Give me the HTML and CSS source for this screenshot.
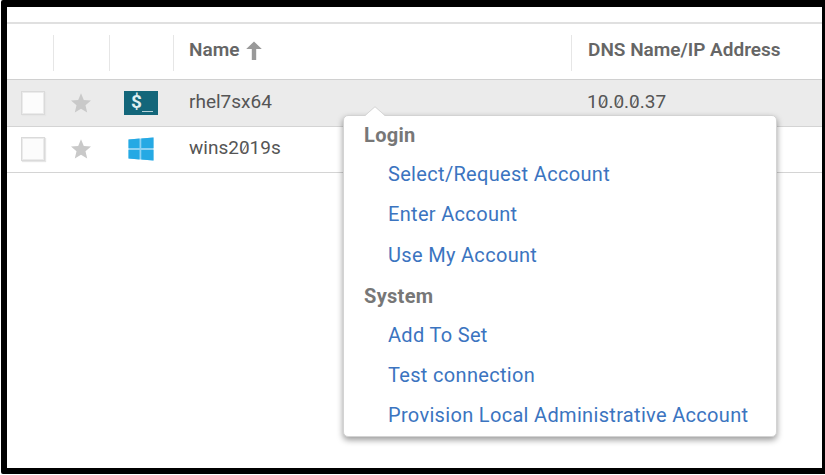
FILE: index.html
```html
<!DOCTYPE html>
<html lang="en">
<head>
<meta charset="utf-8">
<title>Systems</title>
<link rel="stylesheet" href="styles.css">
</head>
<body>
<main class="frame">
  <div class="grid">
    <div class="row head">
      <div class="cell"></div>
      <div class="cell"></div>
      <div class="cell"></div>
      <div class="cell name"><span>Name</span>
        <svg class="arrow" width="16" height="20" viewBox="0 0 16 20"><path d="M8 .5 15.8 8H10.2V19H5.8V8H.2Z" fill="#999"/></svg>
      </div>
      <div class="cell dns"><span>DNS Name/IP Address</span></div>
    </div>
    <div class="row selected">
      <div class="cell check"><span class="box"></span></div>
      <div class="cell star"><svg width="20" height="20" viewBox="0 0 20 20"><path d="M10 .2 12.8 7 20 7.6 14.5 12.3 16.2 19.5 10 15.7 3.8 19.5 5.5 12.3 0 7.6 7.2 7Z" fill="#c9c9c9"/></svg></div>
      <div class="cell os"><span class="terminal">$<i></i></span></div>
      <div class="cell name"><span>rhel7sx64</span></div>
      <div class="cell dns"><span>1<span class="zero">0</span>.<span class="zero">0</span>.<span class="zero">0</span>.37</span></div>
    </div>
    <div class="row plain">
      <div class="cell check"><span class="box"></span></div>
      <div class="cell star"><svg width="20" height="20" viewBox="0 0 20 20"><path d="M10 .2 12.8 7 20 7.6 14.5 12.3 16.2 19.5 10 15.7 3.8 19.5 5.5 12.3 0 7.6 7.2 7Z" fill="#c9c9c9"/></svg></div>
      <div class="cell os"><svg width="26" height="24" viewBox="0 0 26 24"><path d="M.5 2.5 25.5.5V23.5L.5 21.5Z" fill="#8dd1f2"/><path d="M.5 2.5 11.5 1.6V11H.5ZM13.3 1.5 25.5.5V11H13.3ZM.5 13H11.5V22.4L.5 21.5ZM13.3 13H25.5V23.5L13.3 22.5Z" fill="#25a9e4"/></svg></div>
      <div class="cell name"><span>wins2<span class="zero">0</span>19s</span></div>
      <div class="cell dns"></div>
    </div>
  </div>
  <nav class="menu">
    <svg class="notch" width="22" height="11" viewBox="0 0 22 11"><path d="M1 10 11 1 21 10V11H1Z" fill="#fff"/><path d="M1 9.5 11 .7 21 9.5" fill="none" stroke="#d6d6d6"/></svg>
    <h2>Login</h2>
    <a>Select/Request Account</a>
    <a>Enter Account</a>
    <a class="tall">Use My Account</a>
    <h2 class="second">System</h2>
    <a>Add To Set</a>
    <a>Test connection</a>
    <a>Provision Local Administrative Account</a>
  </nav>
</main>
</body>
</html>
```
FILE: styles.css
```css
* { box-sizing: border-box; }
html, body { margin: 0; background: #fff; }
body {
  width: 825px;
  height: 475px;
  overflow: hidden;
  padding: 0 0 1px 1px;
  font: 19px/24px Roboto, "Liberation Sans", sans-serif;
  color: #555;
}
.frame {
  position: relative;
  height: 474px;
  border: solid #000;
  border-width: 7px 3px 6px 6px;
  border-radius: 2px 0 0 2px;
  padding-top: 15px;
  background: #fff;
}
.grid { border-top: 2px solid #e0e0e0; }
.row {
  display: grid;
  grid-template-columns: 47px 56px 64px 398px 1fr;
  height: 46px;
  border-bottom: 1px solid #d4d4d4;
}
.row.selected { background: #ebebeb; height: 47px; }
.row.head { height: 56px; padding: 11px 0 8px; border-color: #d0d0d0; font-weight: 600; color: #666; }
.head .cell { border-right: 1px solid #e6e6e6; }
.head .cell:last-child { border: 0; }
.cell { display: flex; align-items: center; white-space: nowrap; }
.name { padding-left: 15px; }
.dns { padding-left: 15px; }
.plain .name { padding-bottom: 4px; }
.selected .name, .selected .dns { padding-bottom: 2px; }
.head .cell { padding-bottom: 6px; }
.head .dns { padding-left: 16px; }
.arrow { margin: 2px 0 0 7px; }
.check { padding-left: 14px; }
.plain .check, .plain .star, .plain .os { padding-bottom: 2px; }
.box {
  width: 24px;
  height: 24px;
  border: 1px solid #dadada;
  background: #fcfcfc;
  box-shadow: inset 0 0 0 1px #ebebeb, 1px 1px 1px #e6e6e6;
}
.star { padding-left: 17px; }
.os { justify-content: center; padding-right: 2px; }
.terminal {
  display: flex;
  width: 34px;
  height: 24px;
  padding-left: 7px;
  background: #13667a;
  color: #e0eff2;
  font-size: 19px;
  font-weight: 700;
  line-height: 22px;
}
.terminal i { width: 11px; height: 1px; margin-top: 20px; background: #b5d2d9; }
.zero { position: relative; display: inline-block; }
.zero::after {
  content: "";
  position: absolute;
  left: 5px;
  top: 7px;
  width: 1px;
  height: 10px;
  background: #777;
  transform: rotate(30deg);
}
.menu {
  position: absolute;
  left: 336px;
  top: 108px;
  width: 434px;
  height: 322px;
  border: 1px solid #d3d3d3;
  border-radius: 5px;
  background: #fff;
  box-shadow: 0 3px 6px rgba(0, 0, 0, .4);
  font-size: 20px;
  letter-spacing: .32px;
}
.notch { position: absolute; left: 20px; top: -10px; }
.menu h2, .menu a { display: flex; align-items: center; height: 40px; margin: 0; white-space: nowrap; }
.menu h2 { padding-left: 20px; font-size: 20px; font-weight: 700; color: #777; }
.menu h2:first-of-type { height: 38px; }
.menu h2.second { height: 39px; }
.menu a { padding-left: 44px; color: #3b74c0; }
.menu a.tall { height: 42px; }
```
